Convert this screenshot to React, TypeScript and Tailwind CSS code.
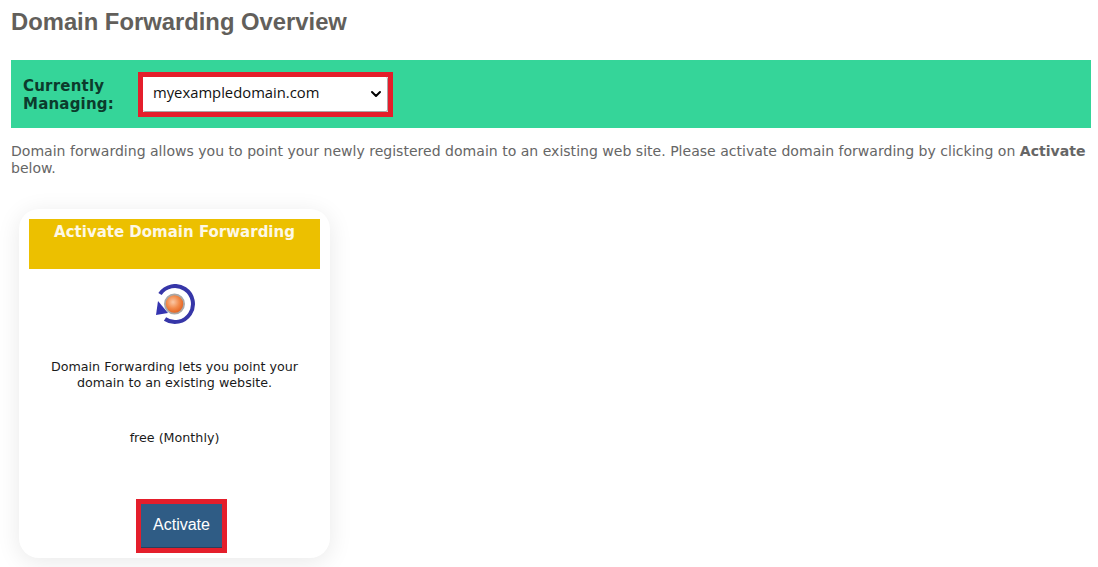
import { ChevronDown } from "lucide-react";

function ForwardIcon() {
	return (
		<svg width="42" height="42" viewBox="0 0 42 42" fill="none">
			<defs>
				<radialGradient id="ball" cx="0.42" cy="0.4" r="0.6">
					<stop offset="0" stopColor="#fac8a6" />
					<stop offset="0.55" stopColor="#f28a4a" />
					<stop offset="1" stopColor="#e2601f" />
				</radialGradient>
			</defs>
			<path d="M6 10 A18 18 0 1 1 11 35" stroke="#3636a8" strokeWidth="4" />
			<circle cx="20.5" cy="20" r="9.6" fill="url(#ball)" stroke="#a8a8a8" strokeWidth="1.8" />
			<path d="M4 17 L2 31 L14 29 Z" fill="#3434b0" />
		</svg>
	);
}

export default function App() {
	return (
		<div className="h-[567px] overflow-hidden bg-white px-[11px] pt-[9px] font-['DejaVu_Sans',sans-serif] text-[14.05px] text-[#666666]">
			<h1 className="h-[26px] font-['Liberation_Sans',sans-serif] text-[23.8px] leading-[26px] font-bold text-[#625f5b]">
				Domain Forwarding Overview
			</h1>
			<div className="mt-[25px] flex h-[68px] w-[1080px] items-center bg-[#35d599] pl-[12px]">
				<div className="mt-[2px] w-[115px] text-[15px] leading-[18px] font-bold tracking-[0.2px] text-[#0c3b2c]">
					Currently
					<br />
					Managing:
				</div>
				<div className="relative h-[45px] w-[255px] border-[5px] border-[#e41e2b] bg-white">
					<div className="flex h-full items-center justify-between rounded-[2px] border-r border-b border-[#a8a8a8] pr-[3px] pl-[10px] font-['Open_Sans',sans-serif] text-[14.8px] text-[#111111]">
						<span className="-mt-[3px]">myexampledomain.com</span>
						<ChevronDown size={16} strokeWidth={3} className="text-black" />
					</div>
				</div>
			</div>
			<p className="mt-[15px] w-[1080px] leading-[17px]">
				Domain forwarding allows you to point your newly registered domain to an existing web site. Please activate domain forwarding by clicking on{" "}
				<b>Activate</b> below.
			</p>
			<div className="mt-[32px] ml-[8px] flex h-[349px] w-[311px] flex-col items-center rounded-[20px] bg-white px-[10px] pt-[10px] shadow-[0_4px_24px_rgba(0,0,0,0.09)]">
				<div className="h-[50px] w-full bg-[#ecc000] pt-[4px] text-center text-[15px] leading-[18px] font-bold text-[#fdf8e6]">
					Activate Domain Forwarding
				</div>
				<div className="mt-[15px] h-[42px]">
					<ForwardIcon />
				</div>
				<p className="mt-[33px] w-[260px] text-center text-[12.7px] leading-[16px] text-[#1a1a1a]">
					Domain Forwarding lets you point your domain to an existing website.
				</p>
				<p className="mt-[39px] text-center text-[12.7px] leading-[16px] text-[#1a1a1a]">free (Monthly)</p>
				<button className="mt-[53px] ml-[14px] h-[54px] w-[91px] border-[5px] border-[#e41e2b] bg-[#2f5c85] pb-[2px] font-['Liberation_Sans',sans-serif] text-[16px] text-white shadow-[inset_0_-1px_0_#2b3f5c]">
					Activate
				</button>
			</div>
		</div>
	);
}
